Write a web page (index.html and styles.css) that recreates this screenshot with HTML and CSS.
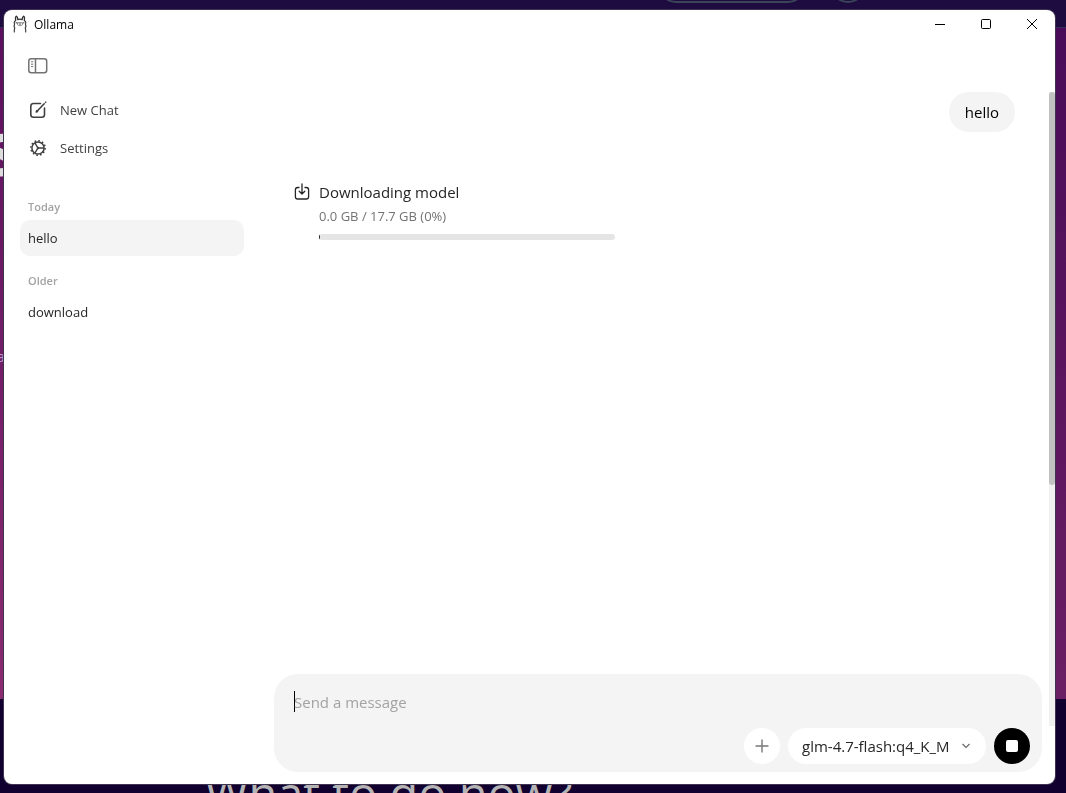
FILE: index.html
```html
<!DOCTYPE html>
<html lang="en">
<head>
  <meta charset="UTF-8">
  <title>Ollama</title>
  <link rel="stylesheet" href="styles.css">
</head>
<body>

  <!-- page behind the app window -->
  <div class="backdrop" aria-hidden="true">
    <div class="backdrop-bar">
      <span class="backdrop-search"></span>
      <span class="backdrop-avatar"></span>
    </div>
    <div class="backdrop-hero">
      <span class="hero-title">s</span>
      <span class="hero-text">a</span>
    </div>
    <div class="backdrop-next">What to do now?</div>
  </div>

  <div class="window">
    <header class="titlebar">
      <svg class="llama" width="14" height="18" viewBox="0 0 14 18" fill="none" stroke="#333" stroke-width="1.1" stroke-linecap="round" stroke-linejoin="round">
        <path d="M1.300 17v-2.300l.5-1.600-.8-1.600.5-2-.3-2.300 1.400-1.800M12.700 17v-2.300l-.5-1.600.8-1.600-.5-2 .3-2.300-1.400-1.800"/>
        <path d="M2.600 5.400l-.1-3.200.9-1 1 1.200.4 2.200q2.200-.9 4.400 0l.4-2.200 1-1.200.9 1-.1 3.200" stroke-width="1.300"/>
        <path d="M4.500 8q2.500-1.500 5 0 .9 2.600-2.500 2.700Q3.600 10.600 4.500 8z" stroke="#777" stroke-width=".8"/>
        <path d="M3 7.800h1M10 7.800h1M6.300 9h1.400" stroke-width=".9"/>
      </svg>
      <span class="app-name">Ollama</span>
      <div class="window-buttons">
        <button aria-label="Minimize"><svg width="10" height="10" viewBox="0 0 10 10" stroke="#000"><path d="M0 5.500h10"/></svg></button>
        <button aria-label="Maximize"><svg width="10" height="10" viewBox="0 0 10 10" fill="none" stroke="#000"><rect x=".5" y=".5" width="9" height="9" rx="1"/></svg></button>
        <button aria-label="Close"><svg width="10" height="10" viewBox="0 0 10 10" stroke="#000"><path d="M0 0l10 10M10 0L0 10"/></svg></button>
      </div>
    </header>

    <div class="content">
      <aside class="sidebar">
        <button class="toggle" aria-label="Toggle sidebar">
          <svg width="20" height="16" viewBox="0 0 20 16" fill="none" stroke="#737373" stroke-width="1.500">
            <rect x=".8" y=".8" width="17.900" height="13.900" rx="2.500"/>
            <path d="M7.500 1v13.500"/>
            <path d="M3 3.800h2.200M3 6.200h2.200M3 8.600h2.200" stroke-width="1"/>
          </svg>
        </button>

        <nav class="actions">
          <a href="#new">
            <svg width="18" height="18" viewBox="0 0 18 18" fill="none" stroke="#404040" stroke-width="1.600" stroke-linecap="round" stroke-linejoin="round">
              <path d="M11.500 2.500H4.500A2.700 2.700 0 0 0 1.800 5.200v8.300a2.700 2.700 0 0 0 2.700 2.700h8.300a2.700 2.700 0 0 0 2.700-2.700V7"/>
              <path d="M8 10.200L15.200 2.800"/>
              <path d="M7.300 10.900l.4-1.200.8.800zM16.600 1.300l.1-.1"/>
            </svg>
            New Chat
          </a>
          <a href="#settings">
            <svg width="18" height="18" viewBox="0 0 18 18" fill="none" stroke="#404040">
              <circle cx="9" cy="9" r="7.200" stroke-width="1.400" stroke-dasharray="1.700 2.070"/>
              <circle cx="9" cy="9" r="6.100" stroke-width="1.500"/>
              <path d="M9.500 9H15M8.700 8.600L5.900 3.800M8.700 9.400l-2.800 4.800" stroke-width="1.300"/>
              <circle cx="9" cy="9" r="1.200" fill="#404040" stroke="none"/>
            </svg>
            Settings
          </a>
        </nav>

        <nav class="history">
          <h2>Today</h2>
          <a class="active" href="#hello">hello</a>
          <h2>Older</h2>
          <a href="#download">download</a>
        </nav>
      </aside>

      <main class="main">
        <div class="chat">
          <div class="messages">
            <div class="bubble">hello</div>
            <div class="download">
              <svg width="16" height="18" viewBox="0 0 16 18" fill="none" stroke="#262626" stroke-width="1.300" stroke-linecap="round" stroke-linejoin="round">
                <path d="M5 4.500H3.700A2.300 2.300 0 0 0 1.400 6.800v6.900A2.300 2.300 0 0 0 3.700 16h8.600a2.300 2.300 0 0 0 2.300-2.300V6.800a2.300 2.300 0 0 0-2.300-2.300H11"/>
                <path d="M8 1v9.800M5.200 8.200L8 11l2.800-2.800"/>
              </svg>
              <div class="download-info">
                <div class="download-title" id="download-title">Downloading model</div>
                <div class="download-size">0.0 GB / 17.7 GB (0%)</div>
                <div class="progress" role="progressbar" aria-labelledby="download-title" aria-valuenow="0">
                  <div class="progress-fill"></div>
                </div>
              </div>
            </div>
          </div>
          <div class="scrollbar"><div class="scroll-thumb"></div></div>
        </div>

        <form class="composer">
          <div class="message-line">
            <span class="caret"></span>
            <input type="text" aria-label="Message" placeholder="Send a message">
          </div>
          <div class="tools">
            <button class="add" type="button" aria-label="Add file">
              <svg width="14" height="14" viewBox="0 0 14 14" stroke="#777" stroke-width="1.400"><path d="M7 .5v13M.5 7h13"/></svg>
            </button>
            <div class="model">
              <select aria-label="Model"><option>glm-4.7-flash:q4_K_M</option></select>
              <svg width="8" height="6" viewBox="0 0 8 6" fill="none" stroke="#666" stroke-width="1.100"><path d="M.5 1L4 4.500 7.500 1"/></svg>
            </div>
            <button class="stop" type="button" aria-label="Stop"><span></span></button>
          </div>
        </form>
      </main>
    </div>
  </div>

</body>
</html>
```
FILE: styles.css
```css
* {
  box-sizing: border-box;
}

body {
  margin: 0;
  height: 100vh;
  padding: 10px 11px 9px 4px;
  font-family: "Segoe UI", "Open Sans", sans-serif;
  font-size: 13px;
  color: #262626;
}

button, input, select {
  font: inherit;
  color: inherit;
  border: none;
  background: none;
  padding: 0;
}

a {
  color: inherit;
  text-decoration: none;
}

svg {
  display: block;
  flex: none;
}

/* backdrop */
.backdrop {
  position: fixed;
  inset: 0;
  z-index: -1;
  display: flex;
  flex-direction: column;
  overflow: hidden;
  background: #11002f;
}

.backdrop-bar {
  display: flex;
  flex: none;
  align-items: flex-end;
  gap: 24px;
  height: 28px;
  padding: 0 200px 24px 0;
  justify-content: flex-end;
  background: #1e0c40;
  border-bottom: 1px solid #3b2b58;
}

.backdrop-search,
.backdrop-avatar {
  flex: none;
  width: 148px;
  height: 36px;
  border: 2px solid #3a4458;
  border-radius: 18px;
}

.backdrop-avatar {
  width: 36px;
}

.backdrop-hero {
  flex: none;
  height: 671px;
  padding-top: 89px;
  background:
    linear-gradient(to right, transparent, rgba(30, 0, 70, 0.3)),
    linear-gradient(#5b105f, #8b2b70);
}

.hero-title {
  display: block;
  text-indent: -17px;
  font-size: 76px;
  font-weight: bold;
  line-height: 60px;
  color: #ddd;
}

.hero-text {
  display: block;
  margin-top: 168px;
  text-indent: -3px;
  font-size: 14px;
  line-height: 24px;
  color: #b99ac4;
}

.backdrop-next {
  padding: 70px 0 0 205px;
  font-size: 47px;
  font-weight: 500;
  line-height: 48px;
  white-space: nowrap;
  color: #b4b4b4;
}

/* window */
.window {
  display: flex;
  flex-direction: column;
  height: 100%;
  overflow: hidden;
  background: #fff;
  border-radius: 8px;
  box-shadow: 0 0 0 1px #3f3450;
}

.titlebar {
  display: flex;
  flex: none;
  align-items: center;
  gap: 7px;
  height: 28px;
  padding-left: 9px;
  font-size: 12px;
  color: #000;
}

.window-buttons {
  display: flex;
  align-self: stretch;
  margin-left: auto;
}

.window-buttons button {
  display: flex;
  align-items: center;
  justify-content: center;
  width: 46px;
}

.content {
  display: flex;
  flex: 1;
  min-height: 0;
}

/* sidebar */
.sidebar {
  flex: none;
  width: 256px;
  padding: 20px 16px;
}

.toggle {
  display: block;
  margin-left: 8px;
}

.actions {
  display: flex;
  flex-direction: column;
  gap: 2px;
  margin: 18px 0 34px;
}

.actions a,
.history a {
  display: flex;
  align-items: center;
  gap: 13px;
  height: 36px;
  padding: 0 8px 0 9px;
  border-radius: 10px;
}

.actions a {
  color: #404040;
}

.history a {
  padding-left: 8px;
}

.history a.active {
  background: #f4f4f4;
}

.history h2 {
  margin: 18px 0 6px;
  padding-left: 8px;
  font-size: 11px;
  font-weight: 600;
  line-height: 14px;
  color: #a3a3a3;
}

/* chat and composer share one cell, the composer lies over the chat's end */
.main {
  display: grid;
  flex: 1;
  min-width: 0;
}

.chat,
.composer {
  grid-area: 1 / 1;
}

.chat {
  display: flex;
  margin: 54px 0 58px;
}

.messages {
  display: flex;
  flex: 1;
  flex-direction: column;
  gap: 48px;
  padding: 0 34px;
  font-size: 15px;
}

.bubble {
  align-self: flex-end;
  padding: 8px 16px;
  line-height: 24px;
  color: #000;
  background: #f4f4f4;
  border-radius: 20px;
}

.download {
  display: flex;
  gap: 9px;
}

.download svg {
  margin-top: 3px;
}

.download-info {
  width: 296px;
}

.download-title {
  line-height: 24px;
}

.download-size {
  font-size: 13px;
  line-height: 24px;
  color: #737373;
}

.progress {
  height: 6px;
  margin-top: 6px;
  overflow: hidden;
  background: #e5e5e5;
  border-radius: 3px;
}

.progress-fill {
  width: 1px;
  height: 100%;
  background: #262626;
}

.scrollbar {
  flex: none;
  width: 6px;
  background: #f0f0f0;
}

.scroll-thumb {
  height: 62%;
  background: #c1c1c1;
  border-radius: 3px;
}

.composer {
  display: flex;
  flex-direction: column;
  gap: 14px;
  align-self: end;
  margin: 0 13px 12px 14px;
  padding: 15px 12px 8px 20px;
  background: #f4f4f4;
  border-radius: 24px;
  font-size: 15px;
}

.message-line {
  display: flex;
  align-items: center;
  height: 25px;
}

.caret {
  width: 1px;
  height: 21px;
  margin-right: -1px;
  background: #000;
}

.message-line input {
  flex: 1;
  outline: none;
}

.message-line input::placeholder {
  color: #a3a3a3;
}

.tools {
  display: flex;
  justify-content: flex-end;
  gap: 8px;
}

.add,
.stop {
  display: flex;
  align-items: center;
  justify-content: center;
  width: 36px;
  height: 36px;
  background: #fff;
  border-radius: 50%;
}

.model {
  display: flex;
  align-items: center;
  gap: 8px;
  height: 36px;
  padding: 0 16px 0 14px;
  background: #fff;
  border-radius: 18px;
}

.model select {
  width: 152px;
  appearance: none;
}

.stop {
  background: #000;
}

.stop span {
  width: 12px;
  height: 12px;
  background: #fff;
  border-radius: 2px;
}
```
